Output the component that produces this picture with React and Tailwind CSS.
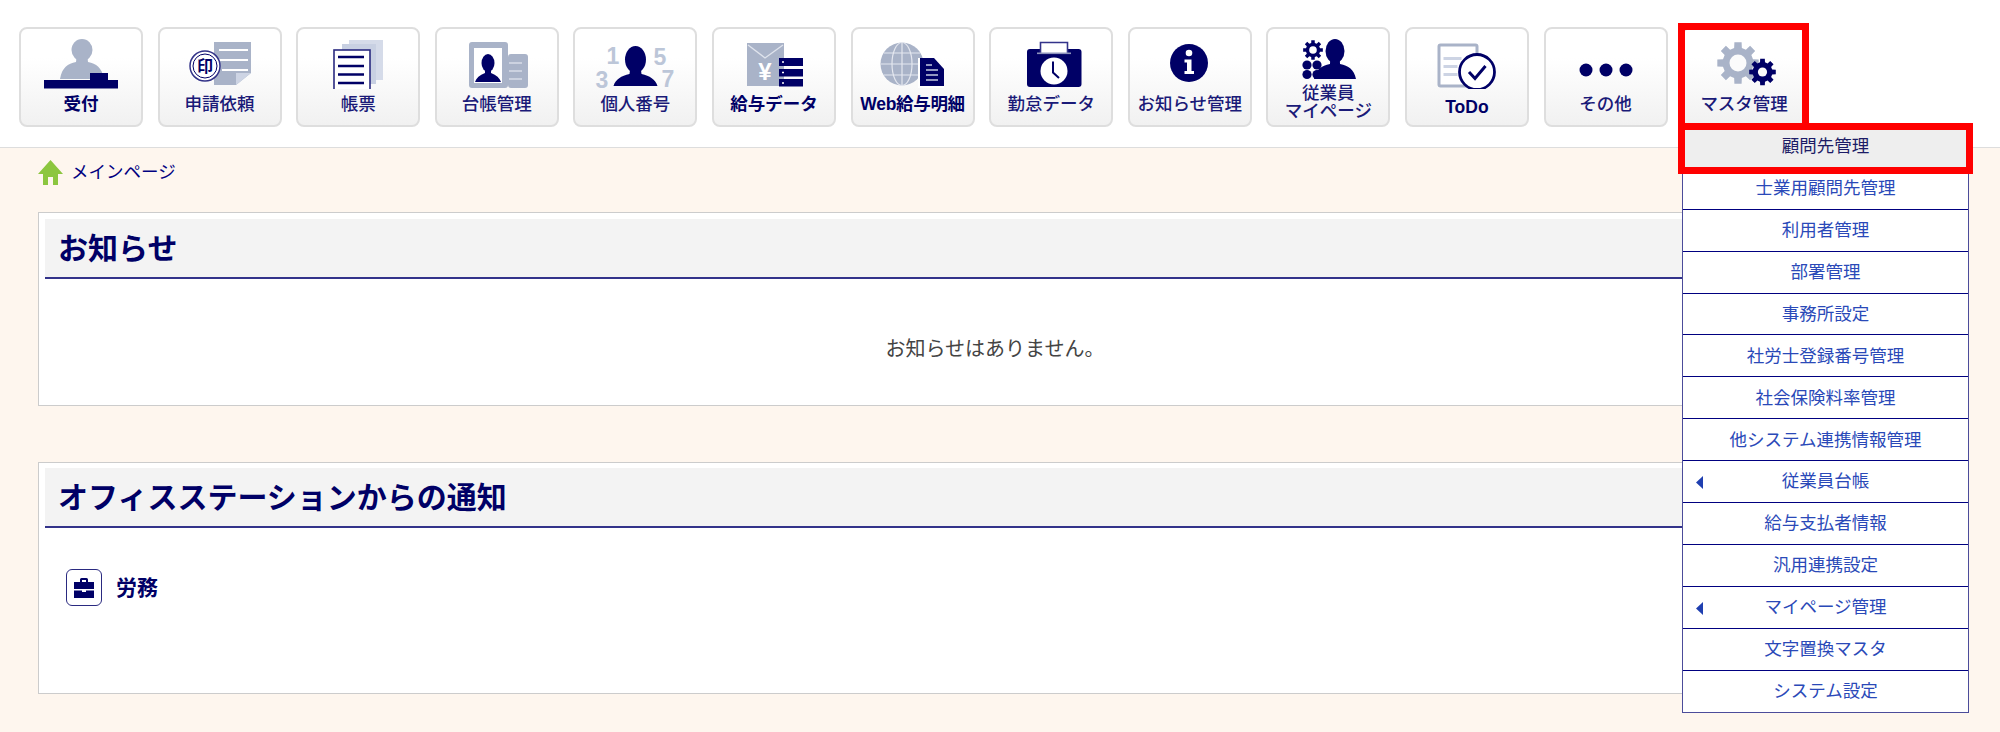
import React from "react";

const N = "#000066";
const G = "#a9b3c8";
const L = "#cdd4e4";

function gearPath(cx, cy, ro, ri, teeth) {
  const pts = [];
  const step = (Math.PI * 2) / teeth;
  for (let i = 0; i < teeth; i++) {
    const a = i * step - Math.PI / 2;
    const w = step * 0.22;
    const b = step * 0.32;
    const p = (r, t) => `${(cx + r * Math.cos(t)).toFixed(2)} ${(cy + r * Math.sin(t)).toFixed(2)}`;
    pts.push(p(ri, a - b), p(ro, a - w), p(ro, a + w), p(ri, a + b));
  }
  return "M" + pts.join("L") + "Z";
}

function Person({ cx, top, headRy, headRx, bottom, halfW, fill, neck }) {
  const cy = top + headRy;
  const s = cy + headRy - 2;
  return (
    <g fill={fill}>
      <ellipse cx={cx} cy={cy} rx={headRx} ry={headRy} />
      <path d={`M${cx - headRx * 0.5} ${s - 3}L${cx + headRx * 0.5} ${s - 3}L${cx + neck} ${s + 3}C${cx + halfW * 0.65} ${s + 5} ${cx + halfW * 0.9} ${s + 8} ${cx + halfW} ${bottom}L${cx - halfW} ${bottom}C${cx - halfW * 0.9} ${s + 8} ${cx - halfW * 0.65} ${s + 5} ${cx - neck} ${s + 3}Z`} />
    </g>
  );
}

const icons = {
  uketsuke: (
    <>
      <Person cx={63} top={12} headRy={11} headRx={10.5} bottom={52} halfW={22} neck={6} fill={G} />
      <rect x={25} y={53} width={74} height={8.5} fill={N} />
      <rect x={71} y={46} width={18} height={8} fill={N} />
    </>
  ),
  shinsei: (
    <>
      <path d="M56 15H93V46L78 58H56Z" fill={G} />
      <path d="M78 58V46H93Z" fill={L} />
      <path d="M61 23H90M61 33H90M64 43H90" stroke="#fff" strokeWidth="2.2" />
      <circle cx={47} cy={39} r={15} fill="#fff" stroke="#333388" strokeWidth="1.5" />
      <circle cx={47} cy={39} r={12} fill="#fff" stroke={N} strokeWidth="1" />
      <text x={47} y={45} textAnchor="middle" fontSize="16" fontWeight="700" fill={N} fontFamily="'Noto Sans CJK JP',sans-serif">印</text>
    </>
  ),
  chohyo: (
    <>
      <rect x={53} y={13} width={34} height={40} fill="#d5dbe9" />
      <rect x={46} y={17} width={34} height={40} fill="#c8d0e2" />
      <rect x={38} y={23} width={36} height={41} fill="#fff" stroke="#2a2a80" strokeWidth="1.6" />
      <path d="M42 30H68M42 39H68M42 47.5H68M42 56H68" stroke={N} strokeWidth="2.4" />
    </>
  ),
  daicho: (
    <>
      <rect x={73} y={27} width={20} height={34} rx={3} fill={G} />
      <path d="M74 36H87M74 44H87M74 52H87" stroke="#d8dde8" strokeWidth="1.6" />
      <rect x={34} y={15} width={39} height={46} rx={3} fill={G} />
      <rect x={39} y={21} width={28} height={35} fill="#fff" />
      <Person cx={53} top={27} headRy={9} headRx={6.5} bottom={55} halfW={13} neck={3} fill={N} />
    </>
  ),
  kojin: (
    <>
      <Person cx={62.5} top={19} headRy={13.5} headRx={10.5} bottom={59} halfW={22} neck={6} fill={N} />
      <g fill="#bcc6d8" fontFamily="'Liberation Sans',sans-serif" fontWeight="700" fontSize="23" textAnchor="middle">
        <text x={40} y={37}>1</text>
        <text x={87} y={38}>5</text>
        <text x={29} y={61}>3</text>
        <text x={95} y={60}>7</text>
      </g>
    </>
  ),
  kyuyo: (
    <>
      <rect x={35} y={16} width={37} height={43} fill={G} />
      <path d="M36 18L53 31L71 18" fill="none" stroke="#dfe3ec" strokeWidth="1.4" />
      <text x={53} y={53} textAnchor="middle" fontSize="24" fontWeight="700" fill="#fff" fontFamily="'Liberation Sans',sans-serif">¥</text>
      <rect x={67} y={31} width={24} height={8} fill={N} />
      <rect x={67} y={42} width={24} height={7.5} fill={N} />
      <rect x={67} y={52} width={24} height={7.5} fill={N} />
      <path d="M70 35h2M70 45.5h2M70 56h2" stroke="#fff" strokeWidth="1.6" />
    </>
  ),
  web: (
    <>
      <circle cx={51} cy={37} r={21.5} fill={G} />
      <ellipse cx={51} cy={37} rx={10} ry={21.5} fill="none" stroke="#e4e7ef" strokeWidth="1.2" />
      <path d="M51 15.5V58.5M30 37H72M33 26H69M33 48H69" stroke="#e4e7ef" strokeWidth="1.2" fill="none" />
      <path d="M67 31H84L93 41V61H67Z" fill="#fff" />
      <path d="M69 31H83L93 42V59H69Z" fill={N} />
      <path d="M75 43H87M75 48H87M75 53H87M75 38H81" stroke="#c4cade" strokeWidth="1.6" />
    </>
  ),
  kintai: (
    <>
      <rect x={38} y={22} width={54.5} height={38} rx={3} fill={N} />
      <path d="M51.5 26V15.5H78.5V26" fill="#fff" stroke="#33338a" strokeWidth="1.6" />
      <rect x={48} y={25.5} width={34} height={1.6} fill="#8e93bb" />
      <circle cx={65} cy={44} r={13.5} fill="#fff" />
      <path d="M64 34.5V45.5L70 51" fill="none" stroke={N} strokeWidth="2" />
    </>
  ),
  oshirase: (
    <>
      <ellipse cx={61} cy={36} rx={19} ry={19} fill={N} />
      <circle cx={61} cy={26} r={3.3} fill="#fff" />
      <path d="M56.5 32.5H63.5V44H66V47H56.5V44H59V35.5H56.5Z" fill="#fff" />
    </>
  ),
  jugyoin: (
    <>
      <Person cx={69} top={12} headRy={12} headRx={9.5} bottom={52} halfW={21} neck={5} fill={N} />
      <rect x={40} y={33} width={22} height={2} fill="#fff" />
      <path d={gearPath(47, 23, 10, 7.2, 8)} fill={N} />
      <circle cx={47} cy={23} r={3.8} fill="#fff" />
      <g fill={N}>
        <circle cx={41} cy={38} r={4.6} />
        <circle cx={51} cy={38} r={4.6} />
        <circle cx={41} cy={47.5} r={4.6} />
        <circle cx={51} cy={47.5} r={4.6} />
      </g>
    </>
  ),
  todo: (
    <>
      <rect x={34} y={18} width={38} height={41} rx={1.5} fill="#fff" stroke={G} strokeWidth="3" />
      <rect x={38.5} y={30} width={18} height={3} fill={L} />
      <rect x={38.5} y={38} width={14} height={3} fill={L} />
      <rect x={38.5} y={46} width={14} height={3} fill={L} />
      <circle cx={72} cy={45} r={17.5} fill="#fff" stroke={N} strokeWidth="2.8" />
      <path d="M64 45L70 51.5L80.5 39" fill="none" stroke={N} strokeWidth="3" />
    </>
  ),
  sonota: (
    <g fill={N}>
      <ellipse cx={42} cy={43} rx={6.5} ry={6.5} />
      <ellipse cx={62} cy={43} rx={6.5} ry={6.5} />
      <ellipse cx={82} cy={43} rx={6.5} ry={6.5} />
    </g>
  ),
  master: (
    <>
      <path d={gearPath(56, 36, 21, 15.5, 8)} fill={G} />
      <circle cx={56} cy={36} r={8.5} fill="#fbfbfb" />
      <path d={gearPath(80.5, 45, 13.5, 10, 8)} fill={N} />
      <circle cx={80.5} cy={45} r={4.6} fill="#fbfbfb" />
    </>
  ),
};

const buttons = [
  { k: "uketsuke", t: ["受付"], c: "font-bold text-[#000066]" },
  { k: "shinsei", t: ["申請依頼"], c: "font-medium text-[#1a1a78]" },
  { k: "chohyo", t: ["帳票"], c: "font-medium text-[#1a1a78]" },
  { k: "daicho", t: ["台帳管理"], c: "font-medium text-[#1a1a78]" },
  { k: "kojin", t: ["個人番号"], c: "font-medium text-[#1a1a78]" },
  { k: "kyuyo", t: ["給与データ"], c: "font-bold text-[#000066]" },
  { k: "web", t: ["Web給与明細"], c: "font-bold text-[#000066] tracking-[-0.3px]" },
  { k: "kintai", t: ["勤怠データ"], c: "font-medium text-[#1a1a78]" },
  { k: "oshirase", t: ["お知らせ管理"], c: "font-medium text-[#1a1a78]" },
  { k: "jugyoin", t: ["従業員", "マイページ"], c: "font-medium text-[#1a1a78] text-[16px]" },
  { k: "todo", t: ["ToDo"], c: "font-bold text-[#000066] mt-[3px]" },
  { k: "sonota", t: ["その他"], c: "font-medium text-[#1a1a78]" },
  { k: "master", t: ["マスタ管理"], c: "font-medium text-[#1a1a78]" },
];

const menu = [
  "顧問先管理", "士業用顧問先管理", "利用者管理", "部署管理", "事務所設定", "社労士登録番号管理", "社会保険料率管理",
  "他システム連携情報管理", "従業員台帳", "給与支払者情報", "汎用連携設定", "マイページ管理", "文字置換マスタ", "システム設定",
];
const withArrow = new Set(["従業員台帳", "マイページ管理"]);

function NavButton({ b }) {
  const two = b.t.length > 1;
  return (
    <div className="box-border w-[124px] h-[100px] shrink-0 rounded-[8px] border-2 border-[#dedede] bg-gradient-to-b from-white from-30% to-[#f1f1f1] flex flex-col items-center overflow-hidden">
      <svg width="120" height={two ? 52 : 60} viewBox={two ? "2 2 120 52" : "2 2 120 60"} className="shrink-0">
        {icons[b.k]}
      </svg>
      <div className={`text-[17.5px] text-center whitespace-nowrap ${two ? "leading-[18px] mt-[3px]" : "leading-[30px]"} ${b.c}`}>
        {b.t.map((x) => <div key={x}>{x}</div>)}
      </div>
    </div>
  );
}

function PanelHead({ children }) {
  return (
    <div className="h-[60px] bg-[#f3f3f3] border-b-2 border-[#33338a] flex items-center pl-[13px] text-[30px] font-bold text-[#000066]">
      {children}
    </div>
  );
}

export default function App() {
  return (
    <div
      className="relative w-[2000px] h-[732px] overflow-hidden bg-[#fef6ee]"
      style={{ fontFamily: "'Liberation Sans','Noto Sans CJK JP',sans-serif" }}
    >
      <header className="box-border h-[148px] bg-white border-b border-[#dddddd] pt-[27px] pl-[19px] flex gap-[14.6px]">
        {buttons.map((b) => <NavButton key={b.k} b={b} />)}
      </header>

      <main className="ml-[38px] mr-[48px]">
        <div className="flex items-center h-[25px] mt-[12px] gap-[8px] overflow-hidden">
          <svg width="25" height="25" viewBox="0 0 25 25" className="shrink-0">
            <path d="M12.5 0L25 14H20V25H15V17H10V25H5V14H0Z" fill="#8cc63f" />
          </svg>
          <span className="text-[17.5px] text-[#000080] leading-[25px]">メインページ</span>
        </div>

        <section className="box-border mt-[27px] h-[194px] bg-white border border-[#cccccc] px-[6px] pt-[6px]">
          <PanelHead>お知らせ</PanelHead>
          <p className="text-center text-[20px] text-[#444444] mt-[55px] leading-[30px]">お知らせはありません。</p>
        </section>

        <section className="box-border mt-[56px] h-[232px] bg-white border border-[#cccccc] px-[6px] pt-[5px]">
          <PanelHead>オフィスステーションからの通知</PanelHead>
          <div className="flex items-center gap-[14px] mt-[41px] ml-[21px]">
            <span className="box-border w-[36px] h-[37px] rounded-[6px] border border-[#2a2a80] flex items-center justify-center">
              <svg width="24" height="24" viewBox="0 0 24 24">
                <path d="M8 6V3.5A1.5 1.5 0 0 1 9.5 2H14.500A1.500 1.500 0 0 1 16 3.500V6H22V13H2V6ZM10 6H14V4H10Z" fill={N} fillRule="evenodd" />
                <path d="M2 14.500H10V16H14V14.500H22V22H2Z" fill={N} />
              </svg>
            </span>
            <span className="text-[21px] font-bold text-[#000066]">労務</span>
          </div>
        </section>
      </main>

      <nav className="box-border absolute left-[1682px] top-[126px] w-[287px] bg-white border-x-[1.5px] border-b-[1.5px] border-[#4c4c9a]">
        {menu.map((m, i) => (
          <div
            key={m}
            className={`relative box-border h-[41.9px] flex items-center justify-center text-[17.5px] border-b border-[#000080] last:border-b-0 ${i === 0 ? "bg-[#eeeeee] text-[#1c1c66]" : "text-[#2a49b8]"}`}
          >
            {withArrow.has(m) && (
              <svg width="7" height="13" viewBox="0 0 7 13" className="absolute left-[13px] top-[15px]">
                <path d="M7 0V13L0 6.500Z" fill="#1f3fb0" />
              </svg>
            )}
            {m}
          </div>
        ))}
      </nav>

      <div className="box-border absolute left-[1678px] top-[23px] w-[131px] h-[107px] border-[7px] border-b-0 border-[#ff0000]" />
      <div className="box-border absolute left-[1678px] top-[123px] w-[295px] h-[51px] border-[7px] border-[#ff0000]" />
    </div>
  );
}
